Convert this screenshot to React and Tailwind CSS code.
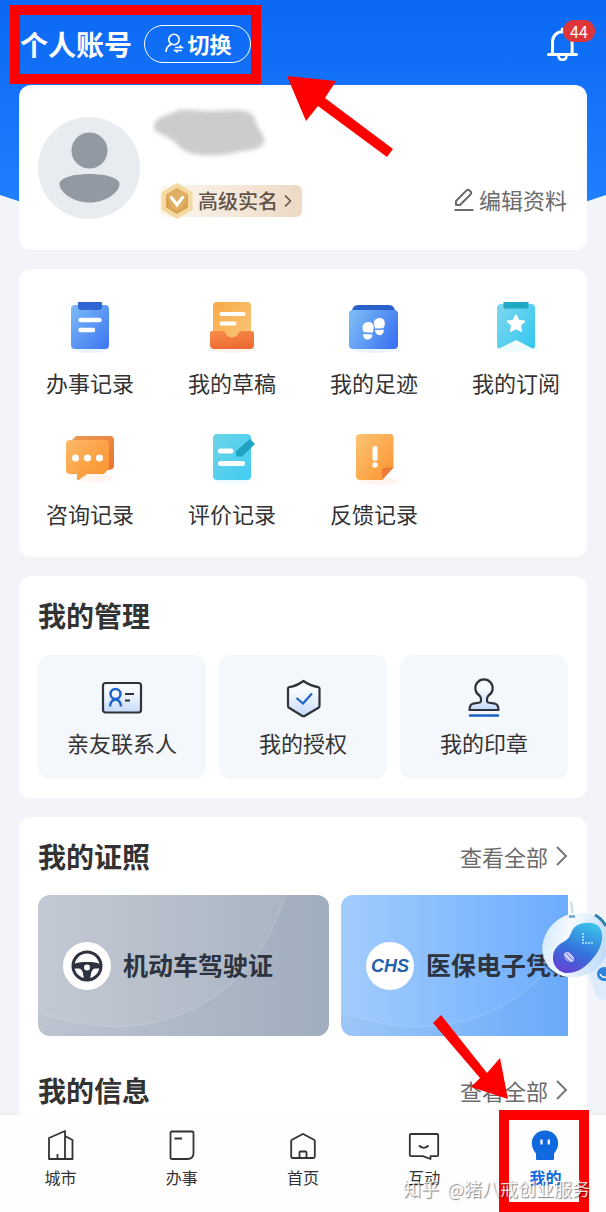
import { ChevronRight } from 'lucide-react'

function RecordIcon() {
  return (
    <svg viewBox="0 0 60 60" className="w-15 h-15" aria-hidden="true">
      <defs>
        <linearGradient id="record" x1="0" y1="0" x2="1" y2="1">
          <stop offset="0" stopColor="#7dbcf8" />
          <stop offset="1" stopColor="#3b74f0" />
        </linearGradient>
      </defs>
      <ellipse cx="30" cy="53" rx="19" ry="4" fill="#eef4ff" />
      <rect x="11" y="9" width="38" height="44" rx="4" fill="url(#record)" />
      <path d="M18 6h24v5a3 3 0 0 1-3 3H21a3 3 0 0 1-3-3z" fill="#2f66d6" />
      <path d="M20.500 24h19M20.500 34h12.500" stroke="#fff" strokeWidth="4.500" strokeLinecap="round" />
    </svg>
  )
}

function DraftIcon() {
  return (
    <svg viewBox="0 0 60 60" className="w-15 h-15" aria-hidden="true">
      <defs>
        <linearGradient id="draftPaper" x1="0" y1="0" x2="1" y2="1">
          <stop offset="0" stopColor="#f7a945" />
          <stop offset="1" stopColor="#fcc87c" />
        </linearGradient>
        <linearGradient id="draftTray" x1="0" y1="0" x2="0.300" y2="1">
          <stop offset="0" stopColor="#f68c48" />
          <stop offset="1" stopColor="#ee6c35" />
        </linearGradient>
      </defs>
      <ellipse cx="30" cy="53" rx="20" ry="4" fill="#fff4ee" />
      <rect x="11" y="6" width="38" height="40" rx="4" fill="url(#draftPaper)" />
      <path d="M8 37a2 2 0 0 1 2-2h11.500c1 0 1.500 1 2 2a7 7 0 0 0 13 0c.5-1 1-2 2-2H50a2 2 0 0 1 2 2v12a4 4 0 0 1-4 4H12a4 4 0 0 1-4-4z" fill="url(#draftTray)" />
      <path d="M19.500 18h22M19.500 27.500h13" stroke="#fff" strokeWidth="4" strokeLinecap="round" />
    </svg>
  )
}

function FootprintIcon() {
  return (
    <svg viewBox="0 0 60 60" className="w-15 h-15" aria-hidden="true">
      <defs>
        <linearGradient id="folder" x1="0" y1="0.300" x2="1" y2="0.700">
          <stop offset="0" stopColor="#79b9f6" />
          <stop offset="1" stopColor="#3c74f1" />
        </linearGradient>
      </defs>
      <ellipse cx="30" cy="53" rx="23" ry="4" fill="#eef4ff" />
      <path d="M8 18v-3a6 6 0 0 1 6-6h31a6 6 0 0 1 6 6v3z" fill="#2860cc" />
      <rect x="5" y="14" width="49" height="39" rx="4" fill="url(#folder)" />
      <g fill="#fff">
        <path d="M24.500 26c3.300 0 5.500 2.200 5.200 5.700l-1 5-9-.6c-.9-1.500-1.400-3.400-1.200-5.300.4-3 2.900-4.800 6-4.800z" />
        <path d="M19.200 38l9.300.6c-.2 3.200-2 5-4.800 5s-4.700-1.900-4.500-5.600z" />
        <path d="M35.500 22c3.300 0 5.500 2.200 5.400 5.500-.1 1.600-.6 3.200-1.600 4.800l-8.300.2-1-5c-.4-3.200 2.100-5.500 5.500-5.500z" />
        <path d="M31 34l8.700-.3c.3 3.500-1.400 5.400-4.100 5.500-2.700 0-4.400-1.800-4.600-5.200z" />
      </g>
    </svg>
  )
}

function BookmarkIcon() {
  return (
    <svg viewBox="0 0 60 60" className="w-15 h-15" aria-hidden="true">
      <defs>
        <linearGradient id="bookmark" x1="0" y1="0" x2="1" y2="0.800">
          <stop offset="0" stopColor="#7fd8ee" />
          <stop offset="1" stopColor="#3ac8f0" />
        </linearGradient>
      </defs>
      <ellipse cx="30" cy="52" rx="19" ry="4" fill="#f1fcff" />
      <path d="M15 8h30a4 4 0 0 1 4 4v38c0 2-1.500 3-3.500 2L30 44l-15.500 8c-2 1-3.500 0-3.500-2V12a4 4 0 0 1 4-4z" fill="url(#bookmark)" />
      <path d="M17.500 6h25v5a1.500 1.500 0 0 1-1.500 1.500H19a1.500 1.500 0 0 1-1.500-1.500z" fill="#1fa9c4" />
      <path d="M30 19l2.600 5.400 5.900.8-4.300 4.100 1.100 5.900-5.300-2.900-5.300 2.900 1.100-5.900-4.300-4.100 5.900-.8z" fill="#fff" stroke="#fff" strokeWidth="1.500" strokeLinejoin="round" />
    </svg>
  )
}

function ChatIcon() {
  return (
    <svg viewBox="0 0 60 60" className="w-15 h-15" aria-hidden="true">
      <defs>
        <linearGradient id="chat" x1="0" y1="0" x2="1" y2="0.800">
          <stop offset="0" stopColor="#fcb968" />
          <stop offset="1" stopColor="#fb9431" />
        </linearGradient>
        <linearGradient id="chatBack" x1="0" y1="0" x2="1" y2="1">
          <stop offset="0" stopColor="#ed9a52" />
          <stop offset="1" stopColor="#ea7232" />
        </linearGradient>
      </defs>
      <ellipse cx="34" cy="51" rx="19" ry="4" fill="#fff4f0" />
      <path d="M16 9h34a4 4 0 0 1 4 4v26c0 3-3 4-8 4H12V13z" fill="url(#chatBack)" />
      <path d="M10 13h35a4 4 0 0 1 4 4v24l-5 6H27l-7.500 5.500c-1.500 1-2.500.5-2.500-1V47h-7a4 4 0 0 1-4-4V17a4 4 0 0 1 4-4z" fill="url(#chat)" />
      <g fill="#fff">
        <circle cx="15.500" cy="31" r="3.500" />
        <circle cx="27.500" cy="31" r="3.500" />
        <circle cx="39.500" cy="31" r="3.500" />
      </g>
    </svg>
  )
}

function ReviewIcon() {
  return (
    <svg viewBox="0 0 60 60" className="w-15 h-15" aria-hidden="true">
      <defs>
        <linearGradient id="review" x1="0" y1="0" x2="1" y2="1">
          <stop offset="0" stopColor="#6dd3e8" />
          <stop offset="1" stopColor="#41cdf3" />
        </linearGradient>
      </defs>
      <ellipse cx="30" cy="53" rx="19" ry="4" fill="#effbff" />
      <rect x="11" y="7" width="38" height="46" rx="4" fill="url(#review)" />
      <path d="M34 24v5.500h6L53 17l-5-5z" fill="#21a3c2" />
      <path d="M18.500 24h10.500M18.500 36.500h22" stroke="#fff" strokeWidth="5" strokeLinecap="round" />
    </svg>
  )
}

function FeedbackIcon() {
  return (
    <svg viewBox="0 0 60 60" className="w-15 h-15" aria-hidden="true">
      <defs>
        <linearGradient id="feedback" x1="0" y1="0" x2="1" y2="1">
          <stop offset="0" stopColor="#fbc473" />
          <stop offset="1" stopColor="#fb932e" />
        </linearGradient>
      </defs>
      <ellipse cx="34" cy="54" rx="20" ry="4" fill="#fff4f0" />
      <path d="M16 7h29.500a4 4 0 0 1 4 4v29.500L38 53H16a4 4 0 0 1-4-4V11a4 4 0 0 1 4-4z" fill="url(#feedback)" />
      <path d="M38 53V44a3.500 3.500 0 0 1 3.500-3.500h8z" fill="#ee7a35" />
      <path d="M31 21.500v10" stroke="#fff" strokeWidth="5" strokeLinecap="round" />
      <circle cx="31" cy="38" r="2.700" fill="#fff" />
    </svg>
  )
}

function ContactIcon() {
  return (
    <svg viewBox="0 0 48 48" className="w-12 h-12" fill="none" strokeWidth="2.200" aria-hidden="true">
      <defs>
        <linearGradient id="tile" x1="0" y1="0" x2="0" y2="1">
          <stop offset="0.300" stopColor="#f7faff" />
          <stop offset="1" stopColor="#c4d9f8" />
        </linearGradient>
      </defs>
      <rect x="5" y="9" width="38" height="29.500" rx="2.500" fill="url(#tile)" stroke="#2f3238" />
      <circle cx="17.500" cy="20" r="5" stroke="#1e64c8" strokeWidth="2.500" />
      <path d="M12 32.500c0-4 2.500-7 5.500-7s5.500 3 5.500 7" stroke="#1e64c8" strokeWidth="2.500" />
      <path d="M27 20h9M27 26.500h5" stroke="#2f3238" />
    </svg>
  )
}

function ShieldIcon() {
  return (
    <svg viewBox="0 0 48 48" className="w-12 h-12" fill="none" strokeWidth="2.200" strokeLinejoin="round" aria-hidden="true">
      <path d="M24.500 7c4 3 9.500 5.300 15 6.200.8.200 1 .5 1 1.300V32c0 .8-.3 1.300-1 1.700l-13.500 8c-1 .6-2 .6-3 0l-13-8c-.7-.4-1-.9-1-1.700V14.500c0-.8.200-1.100 1-1.300 5.500-.9 10.500-3.200 14.500-6.200z" fill="url(#tile)" stroke="#2f3238" />
      <path d="M17.500 24l6.500 5.500 9-10" stroke="#1e64c8" strokeLinejoin="miter" />
    </svg>
  )
}

function StampIcon() {
  return (
    <svg viewBox="0 0 48 48" className="w-12 h-12" fill="none" strokeWidth="2.200" strokeLinejoin="round" aria-hidden="true">
      <path d="M20 28.500c1.500-1.200 1.500-4.500-.5-7a8.700 8.700 0 1 1 9 0c-2 2.500-2 5.800-.5 7l7 1.200c2.500.6 3.500 2.300 3.500 6.300h-29c0-4 1-5.700 3.500-6.300z" fill="url(#tile)" stroke="#2f3238" />
      <path d="M9 41.500h30" stroke="#1e5fc2" strokeWidth="2.500" />
    </svg>
  )
}

function CityIcon() {
  return (
    <svg viewBox="0 0 32 32" className="w-8 h-8" fill="none" stroke="#333" strokeWidth="1.800" strokeLinejoin="round" aria-hidden="true">
      <path d="M20 30V2L4 9v21h23.500V11L20 7M12.500 30v-5" />
    </svg>
  )
}

function WorkIcon() {
  return (
    <svg viewBox="0 0 32 32" className="w-8 h-8" fill="none" stroke="#333" strokeWidth="1.800" strokeLinejoin="round" aria-hidden="true">
      <path d="M6 2.500h20a1.500 1.500 0 0 1 1.500 1.500v20c0 4-2 6-6 6H6A1.500 1.500 0 0 1 4.500 28.500V4A1.500 1.500 0 0 1 6 2.500zM8.500 9.500H16" />
    </svg>
  )
}

function HomeIcon() {
  return (
    <svg viewBox="0 0 32 32" className="w-8 h-8" fill="none" stroke="#333" strokeWidth="1.800" strokeLinejoin="round" aria-hidden="true">
      <path d="M15.300 5.200a1.500 1.500 0 0 1 1.400 0L27 10.800c.6.300.8.700.8 1.300v15.400a1.500 1.500 0 0 1-1.500 1.500H5.700a1.500 1.500 0 0 1-1.500-1.500V12.100c0-.6.200-1 .8-1.300z" />
      <path d="M12.500 29v-5.500a1 1 0 0 1 1-1h5a1 1 0 0 1 1 1V29" />
    </svg>
  )
}

function TalkIcon() {
  return (
    <svg viewBox="0 0 32 32" className="w-8 h-8" fill="none" stroke="#333" strokeWidth="1.800" strokeLinejoin="round" aria-hidden="true">
      <path d="M3 5h26a1.200 1.200 0 0 1 1.200 1.200V26a1.200 1.200 0 0 1-1.200 1.200h-6.500V30L15 27.200H3A1.200 1.200 0 0 1 1.800 26V6.200A1.200 1.200 0 0 1 3 5z" />
      <path d="M11 16.500c3 3 6.500 3 9.500 0" />
    </svg>
  )
}

function MineIcon() {
  return (
    <svg viewBox="0 0 32 32" className="w-8 h-8" aria-hidden="true">
      <path d="M16 1.500c7.500 0 13.200 5.500 13.200 12.700 0 4.300-2 7.800-4.200 10.300V30a1 1 0 0 1-1 1H8a1 1 0 0 1-1-1v-5.500c-2.200-2.500-4.200-6-4.200-10.300C2.800 7 8.500 1.500 16 1.500z" fill="#1169e0" />
      <path d="M12.500 10.500v5M19.800 10.500v5" stroke="#fff" strokeWidth="2.200" />
    </svg>
  )
}

function WheelIcon() {
  return (
    <svg viewBox="0 0 32 32" className="w-8 h-8" aria-hidden="true">
      <circle cx="16" cy="16" r="14" fill="none" stroke="#2d3440" strokeWidth="3" />
      <path d="M2 14.500c4-2 7.500-2.500 14-2.500s10 .5 14 2.500v4h-5.500c-2.500 0-4 2-4.500 5l-1 6h-6l-1-6c-.5-3-2-5-4.500-5H2z" fill="#2d3440" />
      <circle cx="16" cy="17.500" r="3" fill="#fff" />
    </svg>
  )
}

function Robot() {
  return (
    <svg viewBox="0 0 76 120" className="w-19 h-30" aria-hidden="true">
      <defs>
        <linearGradient id="robotBody" x1="0" y1="0" x2="1" y2="1">
          <stop offset="0" stopColor="#c5e2fd" />
          <stop offset="0.400" stopColor="#f6fbff" />
          <stop offset="1" stopColor="#a8cef8" />
        </linearGradient>
        <linearGradient id="robotFace" x1="0.700" y1="0" x2="0.300" y2="1">
          <stop offset="0" stopColor="#3cbfe8" />
          <stop offset="0.550" stopColor="#3374dc" />
          <stop offset="1" stopColor="#6443d4" />
        </linearGradient>
      </defs>
      <path d="M60 76c4-4 10-7 16-8v42c-5 0-10-2-11-6l-2-8c-3-5-5-13-3-20z" fill="#dcecfd" />
      <circle cx="74" cy="84" r="7" fill="#2d83da" />
      <path d="M70 84c1.500 3 4 3.500 6 3" fill="none" stroke="#fff" strokeWidth="1.500" />
      <path d="M41 12l2 13" stroke="#c3dcf2" strokeWidth="2" />
      <ellipse cx="46" cy="55" rx="35" ry="31" transform="rotate(-35 46 55)" fill="url(#robotBody)" />
      <path d="M23 66c1-8 6-12 12-15 7-4 5-11 11-15 8-5 20-4 24 2 5 8 1 21-6 29-8 11-19 17-29 16-8-2-13-9-12-17z" fill="url(#robotFace)" />
      <path d="M39 26.500h6" stroke="#6ba5cc" strokeWidth="2.500" />
      <path d="M65 25c4 2 8 6 11 11" fill="none" stroke="#2c7fae" strokeWidth="3" />
      <path d="M53 43v10h10" fill="none" stroke="#b9ecff" strokeWidth="1.500" strokeDasharray="2 1" />
      <ellipse cx="39" cy="67" rx="6" ry="4" transform="rotate(45 39 67)" fill="#c6cdf8" />
      <path d="M34 66l6 6M36 63l7 7M39 62l5 5" stroke="#5a55d8" strokeWidth="0.800" />
      <path d="M14 74c3 4 6 6 11 9" fill="none" stroke="#3a6d9f" strokeWidth="2" />
    </svg>
  )
}

const shortcuts = [
  { label: '办事记录', icon: RecordIcon },
  { label: '我的草稿', icon: DraftIcon },
  { label: '我的足迹', icon: FootprintIcon },
  { label: '我的订阅', icon: BookmarkIcon },
  { label: '咨询记录', icon: ChatIcon },
  { label: '评价记录', icon: ReviewIcon },
  { label: '反馈记录', icon: FeedbackIcon },
]

const management = [
  { label: '亲友联系人', icon: ContactIcon },
  { label: '我的授权', icon: ShieldIcon },
  { label: '我的印章', icon: StampIcon },
]

const tabs = [
  { label: '城市', icon: CityIcon },
  { label: '办事', icon: WorkIcon },
  { label: '首页', icon: HomeIcon },
  { label: '互动', icon: TalkIcon },
  { label: '我的', icon: MineIcon, active: true },
]

function Header() {
  return (
    <header className="flex items-center justify-between h-[85px] pl-5 pr-4 pt-[2px] text-white">
      <div className="flex items-center gap-3">
        <h1 className="text-[28px] leading-8 font-bold">个人账号</h1>
        <button type="button" className="flex items-center justify-center gap-1 w-[107px] h-[38px] pb-[2px] rounded-full border border-white text-[22px] leading-8 font-bold">
          <svg viewBox="0 0 20 22" className="w-5 h-[22px]" fill="none" stroke="#fff" strokeWidth="1.600" aria-hidden="true">
            <circle cx="10" cy="7.500" r="5.200" />
            <path d="M2 20c0-4 2-6.500 5.500-7.800M11 15.500h7l-2.500-2M18 18.500h-7l2.500 2" />
          </svg>
          切换
        </button>
      </div>
      <button type="button" aria-label="消息" className="relative w-12 h-12">
        <svg viewBox="0 0 48 48" className="w-12 h-12" fill="none" stroke="#fff" strokeWidth="3" strokeLinecap="round" aria-hidden="true">
          <path d="M10.500 33.500V21.500a9.800 9.800 0 0 1 19.600 0v12M6.500 34.500h28M20.300 11V9" />
          <path d="M16.500 35.500c0 2.700 1.700 4.300 4 4.300s4-1.600 4-4.300" strokeWidth="2.500" />
        </svg>
        <span className="absolute top-0 -right-[5px] w-8 h-[22px] rounded-full bg-[#dd3539] text-base leading-[22px] text-center">44</span>
      </button>
    </header>
  )
}

function ProfileCard() {
  return (
    <section className="flex items-center gap-5 h-[165px] pl-[19px] pr-5 rounded-xl bg-white">
      <svg viewBox="0 0 102 102" className="w-[102px] h-[102px] shrink-0" aria-hidden="true">
        <circle cx="51" cy="51" r="51" fill="#e8ecf1" />
        <circle cx="51.500" cy="33.500" r="18" fill="#9299a3" />
        <path d="M21.500 67c0-6 13-10 30-10s30 4 30 10c0 8-13 18.500-30 18.500S21.500 75 21.500 67z" fill="#9299a3" />
      </svg>
      <div className="flex flex-1 flex-col self-start pt-[22px]">
        <svg viewBox="0 5 106 52" className="w-[116px] h-[54px] -ml-2" preserveAspectRatio="none" aria-hidden="true">
          <path d="M20 10c8-5 20-1 32-1s28-3 36 1c7 3 6 10 9 15s7 9 5 15c-3 7-14 6-22 8-14 4-34 5-46 1-9-3-11-10-18-14s-16-5-14-13 12-9 18-12z" fill="#ccc" className="blur-[2px]" />
        </svg>
        <div className="flex items-center justify-between mt-[22px]">
          <button type="button" className="flex items-center h-8 pr-1 rounded-md bg-linear-to-r from-[#fdf7f0] to-[#edd9c4] text-[#63544a] text-xl leading-8 font-medium">
            <svg viewBox="0 0 34 36" className="w-[34px] h-9 mr-1" aria-hidden="true">
              <path d="M17 1l14.500 8.500v17L17 35 2.500 26.500v-17z" fill="#f5d9a2" stroke="#f5d9a2" strokeWidth="2" strokeLinejoin="round" />
              <path d="M17 5l11 6.500v13L17 31 6 24.500v-13z" fill="#d9a250" />
              <path d="M17 5l11 6.500-5 13-6 3.500-6-3.500-5-13z" fill="#e0af63" />
              <path d="M11.500 14.500l5.500 7.500 5.500-7.500" fill="none" stroke="#fff" strokeWidth="3" strokeLinecap="round" />
            </svg>
            高级实名
            <ChevronRight className="w-5 h-5" />
          </button>
          <button type="button" className="flex items-center gap-1 pb-1 text-[#6b6b6b] text-[22px] leading-8">
            <svg viewBox="0 0 22 24" className="w-[22px] h-6" fill="none" stroke="#6b6b6b" strokeWidth="2" strokeLinejoin="round" aria-hidden="true">
              <path d="M3 18v-4L13.500 3.500a2 2 0 0 1 3 0l1 1a2 2 0 0 1 0 3L7 18zM1.500 23h19" />
            </svg>
            编辑资料
          </button>
        </div>
      </div>
    </section>
  )
}

function SectionTitle({ title, more }) {
  return (
    <div className="flex items-center justify-between px-[19px]">
      <h2 className="text-[28px] leading-8 font-bold text-[#333]">{title}</h2>
      {more && (
        <a href="#all" className="flex items-center text-[22px] leading-8 text-[#6b6b6b]">
          查看全部
          <svg viewBox="0 0 20 24" className="w-5 h-6" fill="none" stroke="#777" strokeWidth="2" aria-hidden="true">
            <path d="M9 3l9 9-9 9" />
          </svg>
        </a>
      )}
    </div>
  )
}

function CardWaves() {
  return (
    <svg viewBox="0 0 291 141" preserveAspectRatio="none" className="absolute inset-0 w-full h-full" aria-hidden="true">
      <path d="M0 117c60 22 130 22 185-22 32-26 50-55 62-95h44v141H0z" fill="#3d6f9c" fillOpacity="0.050" />
      <path d="M0 117c60 22 130 22 185-22 32-26 50-55 62-95" fill="none" stroke="#fff" strokeOpacity="0.100" strokeWidth="2" />
    </svg>
  )
}

function Licences() {
  return (
    <div className="flex gap-3 mt-[23px] mx-[19px] overflow-hidden text-[25px] leading-8 font-bold text-[#2d3440]">
      <a href="#driving" className="relative flex items-center shrink-0 gap-3 w-[291px] h-[141px] pl-[25px] rounded-xl overflow-hidden bg-linear-to-r from-[#c3c9d3] to-[#a6b1c0]">
        <CardWaves />
        <span className="relative flex items-center justify-center w-12 h-12 rounded-full bg-white">
          <WheelIcon />
        </span>
        <span className="relative pb-1">机动车驾驶证</span>
      </a>
      <a href="#insurance" className="relative flex items-center shrink-0 gap-3 w-[291px] h-[141px] pl-[25px] rounded-xl overflow-hidden bg-linear-to-r from-[#a2ccfd] to-[#5ca3fd]">
        <CardWaves />
        <span className="relative flex items-center justify-center w-12 h-12 rounded-full bg-white font-['Liberation_Sans',sans-serif] text-lg italic text-[#2460ab]">CHS</span>
        <span className="relative pb-1">医保电子凭证</span>
      </a>
    </div>
  )
}

function TabBar() {
  return (
    <nav className="relative grid grid-cols-5 shrink-0 h-[97px] pt-[14px] bg-[#fefefe] shadow-[0_-1px_4px_rgba(0,0,0,0.04)]">
      {tabs.map(({ label, icon: Icon, active }) => (
        <a
          key={label}
          href="#tab"
          aria-current={active ? 'page' : undefined}
          className={`flex flex-col items-center gap-1 text-base leading-6 ${active ? 'font-bold text-[#1169e0]' : 'text-[#333]'}`}
        >
          <Icon />
          {label}
        </a>
      ))}
    </nav>
  )
}

function Annotations() {
  return (
    <div className="absolute inset-0 overflow-hidden pointer-events-none">
      <div className="absolute left-[10px] top-[5px] w-[251px] h-[79px] border-10 border-[#fe0000]" />
      <svg viewBox="0 0 108 82" className="absolute left-[286px] top-[75px] w-[108px] h-[82px]" aria-hidden="true">
        <path d="M1 1l49 5-11 17 68 51-6 8-69-51-12 15z" fill="#fe0000" />
      </svg>
      <svg viewBox="0 0 76 86" className="absolute right-[97px] bottom-[112px] w-[76px] h-[86px]" aria-hidden="true">
        <path d="M8 1l46 58 13-15 8 41-37-12 9-9L0 9z" fill="#fe0000" />
      </svg>
      <div className="absolute right-[17px] bottom-0 w-[90px] h-[102px] border-10 border-[#fe0000]" />
      <p className="absolute right-4 bottom-3 flex gap-2 text-lg leading-6 whitespace-nowrap text-white/85 [text-shadow:1px_1px_1px_rgba(0,0,0,0.5)]">
        <span>知乎</span>
        <span>@猪八戒创业服务</span>
      </p>
    </div>
  )
}

export default function App() {
  return (
    <div className="relative flex flex-col h-screen overflow-hidden bg-[#f3f4f9] font-['Noto_Sans_CJK_SC',sans-serif]">
      <svg viewBox="0 0 606 250" preserveAspectRatio="none" className="absolute inset-x-0 top-0 w-full h-[250px]" aria-hidden="true">
        <defs>
          <linearGradient id="sky" x1="0" y1="0" x2="0" y2="1">
            <stop offset="0" stopColor="#0a68f4" />
            <stop offset="1" stopColor="#2484ff" />
          </linearGradient>
        </defs>
        <path d="M0 0h606v195Q303 300 0 195z" fill="url(#sky)" />
      </svg>

      <main className="relative flex-1 min-h-0 overflow-hidden">
        <Header />
        <div className="flex flex-col gap-[19px] px-[19px]">
          <ProfileCard />

          <section className="grid grid-cols-4 gap-y-[29px] pt-[27px] pb-7 rounded-xl bg-white">
            {shortcuts.map(({ label, icon: Icon }) => (
              <button key={label} type="button" className="flex flex-col items-center gap-[10px] text-[22px] leading-8 text-[#333]">
                <Icon />
                {label}
              </button>
            ))}
          </section>

          <section className="pt-[23px] pb-[19px] rounded-xl bg-white">
            <SectionTitle title="我的管理" />
            <div className="grid grid-cols-3 gap-[13px] mt-6 px-[19px]">
              {management.map(({ label, icon: Icon }) => (
                <button key={label} type="button" className="flex flex-col items-center gap-1 pt-[19px] pb-[21px] rounded-xl bg-[#f4f8fd] text-[22px] leading-8 text-[#333]">
                  <Icon />
                  {label}
                </button>
              ))}
            </div>
          </section>

          <section className="pt-[23px] pb-10 rounded-t-xl bg-white">
            <SectionTitle title="我的证照" more />
            <Licences />
            <div className="mt-[38px]">
              <SectionTitle title="我的信息" more />
            </div>
          </section>
        </div>
      </main>

      <TabBar />

      <button type="button" aria-label="智能助手" className="absolute right-0 top-[890px]">
        <Robot />
      </button>
      <Annotations />
    </div>
  )
}
